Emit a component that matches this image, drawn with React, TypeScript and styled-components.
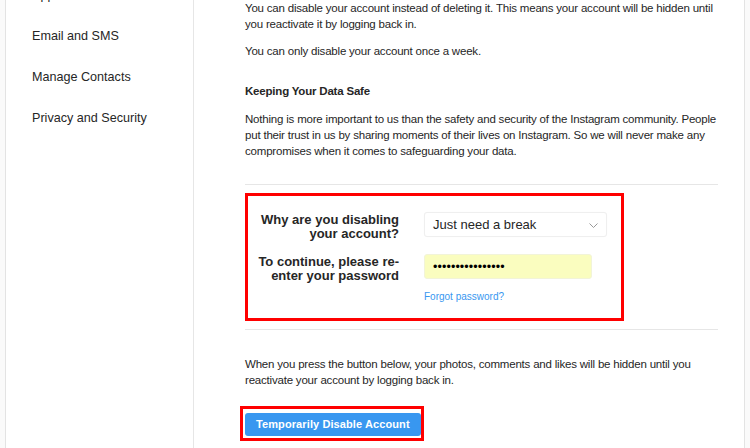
import styled, { createGlobalStyle } from "styled-components";

const GlobalStyle = createGlobalStyle`
  html, body {
    margin: 0;
    padding: 0;
    background: #fafafa;
  }
  body {
    font-family: "Liberation Sans", Arial, Helvetica, sans-serif;
    color: #262626;
  }
`;

const Page = styled.div`
  height: 448px;
  overflow: hidden;
  padding: 0 5px;
`;

const Card = styled.div`
  display: flex;
  height: 100%;
  background: #fff;
  border-left: 1px solid #e3e3e3;
  border-right: 1px solid #e3e3e3;
`;

const Sidebar = styled.ul`
  list-style: none;
  margin: 0;
  padding: 0;
  width: 187px;
  flex-shrink: 0;
  border-right: 1px solid #e6e6e6;
  overflow: hidden;
`;

// the settings list is scrolled, so its first entry is cut at the top
const SideList = styled.div`
  margin-top: -25px;
`;

const SideItem = styled.li`
  padding: 12px 8px 12px 26px;
  font-size: 12.6px;
  line-height: 17px;
  color: #262626;
`;

const Main = styled.main`
  flex: 1;
  padding: 0 26px 0 51px;
  font-size: 11.5px;
  letter-spacing: -0.2px;
  line-height: 16px;
  color: #262626;
`;

const Para = styled.p<{ $gap?: number; $top?: number }>`
  margin: ${(p) => p.$top ?? 0}px 0 ${(p) => p.$gap ?? 11}px;
`;

const Heading = styled.h3`
  margin: 0 0 12px;
  font-size: 11.5px;
  line-height: 16px;
  font-weight: 700;
`;

const Rule = styled.hr`
  border: 0;
  border-top: 1px solid #e6e6e6;
  margin: 0;
`;

const Highlight = styled.div<{ $inline?: boolean }>`
  border: 3px solid #f00;
  display: ${(p) => (p.$inline ? "inline-block" : "block")};
`;

const FormBox = styled(Highlight)`
  margin: 8px 94px 8px 0;
  padding: 16px 14px 15px 0;
  letter-spacing: 0;
`;

const FormRow = styled.div<{ $gap?: number }>`
  display: grid;
  grid-template-columns: 151px 1fr;
  column-gap: 25px;
  align-items: start;
  margin-bottom: ${(p) => p.$gap ?? 0}px;
`;

const Label = styled.label`
  text-align: right;
  font-weight: 700;
  font-size: 13px;
  line-height: 14px;
  color: #262626;
  padding-top: 1px;
`;

const Select = styled.div`
  position: relative;
  height: 25px;
  box-sizing: border-box;
  border: 1px solid #efefef;
  border-radius: 3px;
  background: #fff;
  box-shadow: 0 0 1px rgba(0, 0, 0, 0.04);
  display: flex;
  align-items: center;
  padding-left: 8px;
  font-size: 13px;
  color: #262626;
`;

const Chevron = styled.svg`
  position: absolute;
  right: 8px;
  top: 10px;
`;

const Password = styled.div`
  width: 168px;
  height: 25px;
  box-sizing: border-box;
  background: #fafdbf;
  border: 1px solid #f2f4d8;
  border-radius: 3px;
  display: flex;
  align-items: center;
  padding-left: 8px;
  font-size: 12.5px;
  letter-spacing: 0.1px;
  color: #000;
`;

const Forgot = styled.a`
  display: block;
  margin-top: 12px;
  font-size: 10px;
  line-height: 12px;
  color: #3897f0;
  text-decoration: none;
`;

const ButtonWrap = styled(Highlight)`
  margin: 18px 0 0 -5px;
  padding: 4px 0 2px 2px;
`;

const Button = styled.button`
  display: block;
  background: #3897f0;
  border: 0;
  border-radius: 3px;
  color: #fff;
  font-family: inherit;
  font-weight: 700;
  font-size: 11px;
  letter-spacing: 0.1px;
  line-height: 23px;
  height: 23px;
  padding: 0 11px;
`;

export default function App() {
  return (
    <>
      <GlobalStyle />
      <Page>
        <Card>
          <Sidebar>
            <SideList>
              <SideItem>Apps and Websites</SideItem>
              <SideItem>Email and SMS</SideItem>
              <SideItem>Manage Contacts</SideItem>
              <SideItem>Privacy and Security</SideItem>
            </SideList>
          </Sidebar>
          <Main>
            <Para>
              You can disable your account instead of deleting it. This means
              your account will be hidden until you reactivate it by logging
              back in.
            </Para>
            <Para $gap={24}>You can only disable your account once a week.</Para>
            <Heading>Keeping Your Data Safe</Heading>
            <Para $gap={25}>
              Nothing is more important to us than the safety and security of
              the Instagram community. People put their trust in us by sharing
              moments of their lives on Instagram. So we will never make any
              compromises when it comes to safeguarding your data.
            </Para>
            <Rule />
            <FormBox>
              <FormRow $gap={13}>
                <Label>Why are you disabling your account?</Label>
                <Select>
                  Just need a break
                  <Chevron width="9" height="5" viewBox="0 0 9 5">
                    <path d="M0.5 0.5 L4.5 4.5 L8.5 0.5" fill="none" stroke="#999" strokeWidth="1" />
                  </Chevron>
                </Select>
              </FormRow>
              <FormRow>
                <Label>To continue, please re-enter your password</Label>
                <div>
                  <Password>••••••••••••••••</Password>
                  <Forgot href="#">Forgot password?</Forgot>
                </div>
              </FormRow>
            </FormBox>
            <Rule />
            <Para $gap={0} $top={26}>
              When you press the button below, your photos, comments and likes
              will be hidden until you reactivate your account by logging back
              in.
            </Para>
            <ButtonWrap $inline>
              <Button>Temporarily Disable Account</Button>
            </ButtonWrap>
          </Main>
        </Card>
      </Page>
    </>
  );
}
